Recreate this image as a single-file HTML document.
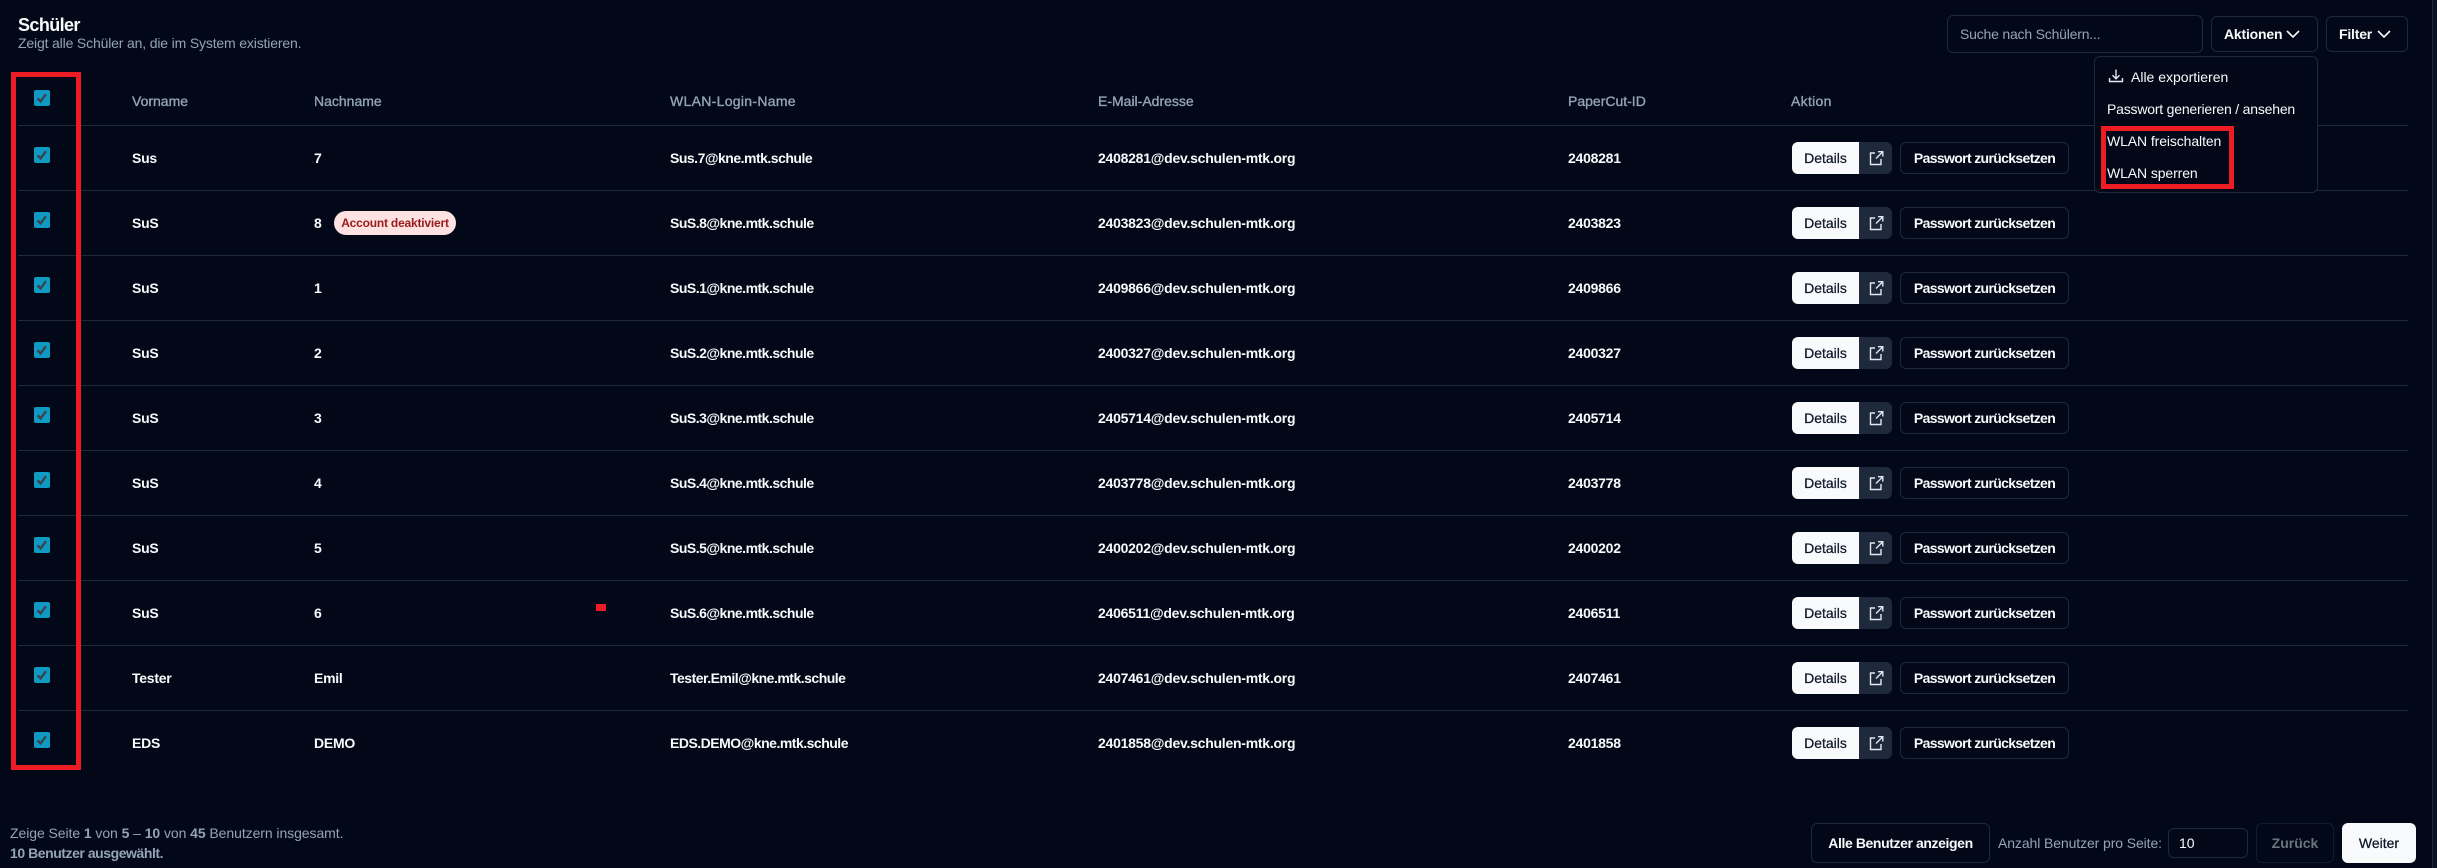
<!DOCTYPE html>
<html lang="de"><head><meta charset="utf-8"><title>Schüler</title>
<style>
html,body{margin:0;padding:0;background:#020817;}
body{position:relative;width:2437px;height:868px;overflow:hidden;font-family:"Liberation Sans",sans-serif;font-size:14px;color:#f8fafc;}
.a{position:absolute;white-space:nowrap;}
.line{position:absolute;left:18px;width:2390px;height:1px;background:#1e293b;}
.th{position:absolute;top:92px;line-height:18px;color:#94a3b8;font-weight:400;-webkit-text-stroke:.35px #94a3b8;}
.row{position:absolute;left:0;width:2437px;height:65px;}
.c{position:absolute;top:23px;line-height:18px;font-weight:700;letter-spacing:-.25px;white-space:nowrap;}
.n{left:132px}.l{left:314px}.w{left:670px;letter-spacing:-.5px}.e{left:1098px}.p{left:1568px}
.cb{position:absolute;left:34px;width:16px;height:16px;background:#0e9ac2;border-radius:2px;}
.cb svg{position:absolute;left:0;top:0;}
.d{position:absolute;left:1792px;top:16px;width:67px;height:32px;background:#f8fafc;color:#0f172a;border-radius:6px 0 0 6px;text-align:center;line-height:32px;font-weight:400;-webkit-text-stroke:.25px #0f172a;}
.i{position:absolute;left:1859px;top:16px;width:33px;height:32px;background:#1e293b;border-radius:0 6px 6px 0;}
.i svg{position:absolute;left:9px;top:7px;}
.r{position:absolute;left:1900px;top:16px;width:167px;height:30px;border:1px solid #1e293b;border-radius:6px;text-align:center;line-height:30px;font-weight:700;letter-spacing:-.65px;}
.b{position:absolute;border:1px solid #1e293b;border-radius:6px;box-sizing:border-box;text-align:center;font-weight:700;white-space:nowrap;}
.rb{position:absolute;background:#ed1c24;}
.mi{position:absolute;left:2107px;line-height:18px;color:#f8fafc;white-space:nowrap;}
</style></head>
<body>
<div class="a" style="left:2432px;top:0;width:5px;height:868px;background:#0a1120;border-left:1px solid #1e293b;box-sizing:border-box"></div>

<div class="a" style="left:18px;top:14px;font-size:18px;line-height:22px;font-weight:700;letter-spacing:-.6px">Schüler</div>
<div class="a" style="left:18px;top:35px;line-height:17px;color:#94a3b8;letter-spacing:-.16px">Zeigt alle Schüler an, die im System existieren.</div>

<div class="b" style="left:1947px;top:15px;width:256px;height:38px;line-height:36px;text-align:left;padding-left:12px;font-weight:400;color:#94a3b8;letter-spacing:-.2px">Suche nach Schülern...</div>
<div class="b" style="left:2211px;top:16px;width:107px;height:36px;line-height:34px;text-align:left;padding-left:12px;letter-spacing:-.2px">Aktionen<svg style="position:absolute;left:73px;top:9px" width="16" height="16" viewBox="0 0 16 16" fill="none" stroke="#f8fafc" stroke-width="1.6"><path d="M2 5l6 6 6-6"/></svg></div>
<div class="b" style="left:2326px;top:16px;width:82px;height:36px;line-height:34px;text-align:left;padding-left:12px;letter-spacing:-.2px">Filter<svg style="position:absolute;left:49px;top:9px" width="16" height="16" viewBox="0 0 16 16" fill="none" stroke="#f8fafc" stroke-width="1.6"><path d="M2 5l6 6 6-6"/></svg></div>

<div class="cb" style="top:90px"><svg width="16" height="16" viewBox="0 0 16 16" fill="none" stroke="#3b4250" stroke-width="2.4"><path d="M3.6 8.4l3 3 5.4-7.2"/></svg></div>
<div class="th" style="left:132px">Vorname</div>
<div class="th" style="left:314px">Nachname</div>
<div class="th" style="left:670px;letter-spacing:.3px">WLAN-Login-Name</div>
<div class="th" style="left:1098px">E-Mail-Adresse</div>
<div class="th" style="left:1568px">PaperCut-ID</div>
<div class="th" style="left:1791px;letter-spacing:.3px">Aktion</div>
<div class="line" style="top:125px"></div>

<div class="row" style="top:126px"><div class="cb" style="top:21px"><svg width="16" height="16" viewBox="0 0 16 16" fill="none" stroke="#3b4250" stroke-width="2.4"><path d="M3.6 8.4l3 3 5.4-7.2"/></svg></div><div class="c n">Sus</div><div class="c l">7</div><div class="c w">Sus.7@kne.mtk.schule</div><div class="c e">2408281@dev.schulen-mtk.org</div><div class="c p">2408281</div><div class="d">Details</div><div class="i"><svg width="16" height="18" viewBox="0 0 16 18" fill="none" stroke="#e2e8f0" stroke-width="1.4"><path d="M7 4H2.5v11.5H13V10M8 9.5L14.5 3M10 2.7h4.8v4.8"/></svg></div><div class="r">Passwort zurücksetzen</div></div>
<div class="line" style="top:190px"></div>

<div class="row" style="top:191px"><div class="cb" style="top:21px"><svg width="16" height="16" viewBox="0 0 16 16" fill="none" stroke="#3b4250" stroke-width="2.4"><path d="M3.6 8.4l3 3 5.4-7.2"/></svg></div><div class="c n">SuS</div><div class="c l">8</div><div class="a" style="left:334px;top:20px;width:122px;height:24px;background:#fee2e2;border-radius:12px;color:#991b1b;font-size:12px;font-weight:700;line-height:24px;text-align:center;letter-spacing:-.2px">Account deaktiviert</div><div class="c w">SuS.8@kne.mtk.schule</div><div class="c e">2403823@dev.schulen-mtk.org</div><div class="c p">2403823</div><div class="d">Details</div><div class="i"><svg width="16" height="18" viewBox="0 0 16 18" fill="none" stroke="#e2e8f0" stroke-width="1.4"><path d="M7 4H2.5v11.5H13V10M8 9.5L14.5 3M10 2.7h4.8v4.8"/></svg></div><div class="r">Passwort zurücksetzen</div></div>
<div class="line" style="top:255px"></div>

<div class="row" style="top:256px"><div class="cb" style="top:21px"><svg width="16" height="16" viewBox="0 0 16 16" fill="none" stroke="#3b4250" stroke-width="2.4"><path d="M3.6 8.4l3 3 5.4-7.2"/></svg></div><div class="c n">SuS</div><div class="c l">1</div><div class="c w">SuS.1@kne.mtk.schule</div><div class="c e">2409866@dev.schulen-mtk.org</div><div class="c p">2409866</div><div class="d">Details</div><div class="i"><svg width="16" height="18" viewBox="0 0 16 18" fill="none" stroke="#e2e8f0" stroke-width="1.4"><path d="M7 4H2.5v11.5H13V10M8 9.5L14.5 3M10 2.7h4.8v4.8"/></svg></div><div class="r">Passwort zurücksetzen</div></div>
<div class="line" style="top:320px"></div>

<div class="row" style="top:321px"><div class="cb" style="top:21px"><svg width="16" height="16" viewBox="0 0 16 16" fill="none" stroke="#3b4250" stroke-width="2.4"><path d="M3.6 8.4l3 3 5.4-7.2"/></svg></div><div class="c n">SuS</div><div class="c l">2</div><div class="c w">SuS.2@kne.mtk.schule</div><div class="c e">2400327@dev.schulen-mtk.org</div><div class="c p">2400327</div><div class="d">Details</div><div class="i"><svg width="16" height="18" viewBox="0 0 16 18" fill="none" stroke="#e2e8f0" stroke-width="1.4"><path d="M7 4H2.5v11.5H13V10M8 9.5L14.5 3M10 2.7h4.8v4.8"/></svg></div><div class="r">Passwort zurücksetzen</div></div>
<div class="line" style="top:385px"></div>

<div class="row" style="top:386px"><div class="cb" style="top:21px"><svg width="16" height="16" viewBox="0 0 16 16" fill="none" stroke="#3b4250" stroke-width="2.4"><path d="M3.6 8.4l3 3 5.4-7.2"/></svg></div><div class="c n">SuS</div><div class="c l">3</div><div class="c w">SuS.3@kne.mtk.schule</div><div class="c e">2405714@dev.schulen-mtk.org</div><div class="c p">2405714</div><div class="d">Details</div><div class="i"><svg width="16" height="18" viewBox="0 0 16 18" fill="none" stroke="#e2e8f0" stroke-width="1.4"><path d="M7 4H2.5v11.5H13V10M8 9.5L14.5 3M10 2.7h4.8v4.8"/></svg></div><div class="r">Passwort zurücksetzen</div></div>
<div class="line" style="top:450px"></div>

<div class="row" style="top:451px"><div class="cb" style="top:21px"><svg width="16" height="16" viewBox="0 0 16 16" fill="none" stroke="#3b4250" stroke-width="2.4"><path d="M3.6 8.4l3 3 5.4-7.2"/></svg></div><div class="c n">SuS</div><div class="c l">4</div><div class="c w">SuS.4@kne.mtk.schule</div><div class="c e">2403778@dev.schulen-mtk.org</div><div class="c p">2403778</div><div class="d">Details</div><div class="i"><svg width="16" height="18" viewBox="0 0 16 18" fill="none" stroke="#e2e8f0" stroke-width="1.4"><path d="M7 4H2.5v11.5H13V10M8 9.5L14.5 3M10 2.7h4.8v4.8"/></svg></div><div class="r">Passwort zurücksetzen</div></div>
<div class="line" style="top:515px"></div>

<div class="row" style="top:516px"><div class="cb" style="top:21px"><svg width="16" height="16" viewBox="0 0 16 16" fill="none" stroke="#3b4250" stroke-width="2.4"><path d="M3.6 8.4l3 3 5.4-7.2"/></svg></div><div class="c n">SuS</div><div class="c l">5</div><div class="c w">SuS.5@kne.mtk.schule</div><div class="c e">2400202@dev.schulen-mtk.org</div><div class="c p">2400202</div><div class="d">Details</div><div class="i"><svg width="16" height="18" viewBox="0 0 16 18" fill="none" stroke="#e2e8f0" stroke-width="1.4"><path d="M7 4H2.5v11.5H13V10M8 9.5L14.5 3M10 2.7h4.8v4.8"/></svg></div><div class="r">Passwort zurücksetzen</div></div>
<div class="line" style="top:580px"></div>

<div class="row" style="top:581px"><div class="cb" style="top:21px"><svg width="16" height="16" viewBox="0 0 16 16" fill="none" stroke="#3b4250" stroke-width="2.4"><path d="M3.6 8.4l3 3 5.4-7.2"/></svg></div><div class="c n">SuS</div><div class="c l">6</div><div class="c w">SuS.6@kne.mtk.schule</div><div class="c e">2406511@dev.schulen-mtk.org</div><div class="c p">2406511</div><div class="d">Details</div><div class="i"><svg width="16" height="18" viewBox="0 0 16 18" fill="none" stroke="#e2e8f0" stroke-width="1.4"><path d="M7 4H2.5v11.5H13V10M8 9.5L14.5 3M10 2.7h4.8v4.8"/></svg></div><div class="r">Passwort zurücksetzen</div></div>
<div class="line" style="top:645px"></div>

<div class="row" style="top:646px"><div class="cb" style="top:21px"><svg width="16" height="16" viewBox="0 0 16 16" fill="none" stroke="#3b4250" stroke-width="2.4"><path d="M3.6 8.4l3 3 5.4-7.2"/></svg></div><div class="c n">Tester</div><div class="c l">Emil</div><div class="c w">Tester.Emil@kne.mtk.schule</div><div class="c e">2407461@dev.schulen-mtk.org</div><div class="c p">2407461</div><div class="d">Details</div><div class="i"><svg width="16" height="18" viewBox="0 0 16 18" fill="none" stroke="#e2e8f0" stroke-width="1.4"><path d="M7 4H2.5v11.5H13V10M8 9.5L14.5 3M10 2.7h4.8v4.8"/></svg></div><div class="r">Passwort zurücksetzen</div></div>
<div class="line" style="top:710px"></div>

<div class="row" style="top:711px"><div class="cb" style="top:21px"><svg width="16" height="16" viewBox="0 0 16 16" fill="none" stroke="#3b4250" stroke-width="2.4"><path d="M3.6 8.4l3 3 5.4-7.2"/></svg></div><div class="c n">EDS</div><div class="c l">DEMO</div><div class="c w">EDS.DEMO@kne.mtk.schule</div><div class="c e">2401858@dev.schulen-mtk.org</div><div class="c p">2401858</div><div class="d">Details</div><div class="i"><svg width="16" height="18" viewBox="0 0 16 18" fill="none" stroke="#e2e8f0" stroke-width="1.4"><path d="M7 4H2.5v11.5H13V10M8 9.5L14.5 3M10 2.7h4.8v4.8"/></svg></div><div class="r">Passwort zurücksetzen</div></div>

<div class="a" style="left:2094px;top:56px;width:224px;height:137px;box-sizing:border-box;background:#020817;border:1px solid #1e293b;border-radius:6px"></div>
<svg class="a" style="left:2108px;top:68px" width="16" height="16" viewBox="0 0 16 16" fill="none" stroke="#e2e8f0" stroke-width="1.4"><path d="M8 1.5v9M4.5 7.2L8 10.7l3.5-3.5M1.5 10v3.5h13V10"/></svg>
<div class="mi" style="left:2131px;top:68px">Alle exportieren</div>
<div class="mi" style="top:100px;letter-spacing:-.2px">Passwort generieren / ansehen</div>
<div class="mi" style="top:132px;letter-spacing:-.1px">WLAN freischalten</div>
<div class="mi" style="top:164px;letter-spacing:-.1px">WLAN sperren</div>

<div class="rb" style="left:11px;top:72px;width:70px;height:5px"></div>
<div class="rb" style="left:11px;top:765px;width:70px;height:5px"></div>
<div class="rb" style="left:11px;top:72px;width:5px;height:698px"></div>
<div class="rb" style="left:76px;top:72px;width:5px;height:698px"></div>
<div class="rb" style="left:2101px;top:126px;width:133px;height:5px"></div>
<div class="rb" style="left:2101px;top:184px;width:133px;height:5px"></div>
<div class="rb" style="left:2101px;top:126px;width:5px;height:63px"></div>
<div class="rb" style="left:2229px;top:126px;width:5px;height:63px"></div>
<div class="rb" style="left:596px;top:604px;width:10px;height:7px"></div>

<div class="a" style="left:10px;top:824px;line-height:18px;color:#94a3b8;letter-spacing:-.07px">Zeige Seite <b>1</b> von <b>5</b> – <b>10</b> von <b>45</b> Benutzern insgesamt.</div>
<div class="a" style="left:10px;top:844px;line-height:18px;color:#94a3b8;font-weight:700;letter-spacing:-.45px">10 Benutzer ausgewählt.</div>

<div class="b" style="left:1811px;top:823px;width:179px;height:40px;line-height:38px;letter-spacing:-.4px">Alle Benutzer anzeigen</div>
<div class="a" style="left:1998px;top:834px;line-height:18px;color:#94a3b8;letter-spacing:-.1px">Anzahl Benutzer pro Seite:</div>
<div class="b" style="left:2168px;top:828px;width:80px;height:30px;line-height:28px;text-align:left;padding-left:10px;font-weight:400">10</div>
<div class="b" style="left:2256px;top:823px;width:78px;height:40px;line-height:38px;color:#6b7280;border-color:#131c2c">Zurück</div>
<div class="b" style="left:2342px;top:823px;width:74px;height:40px;line-height:40px;background:#f8fafc;border:0;color:#0f172a;font-weight:400;-webkit-text-stroke:.25px #0f172a">Weiter</div>
</body></html>
